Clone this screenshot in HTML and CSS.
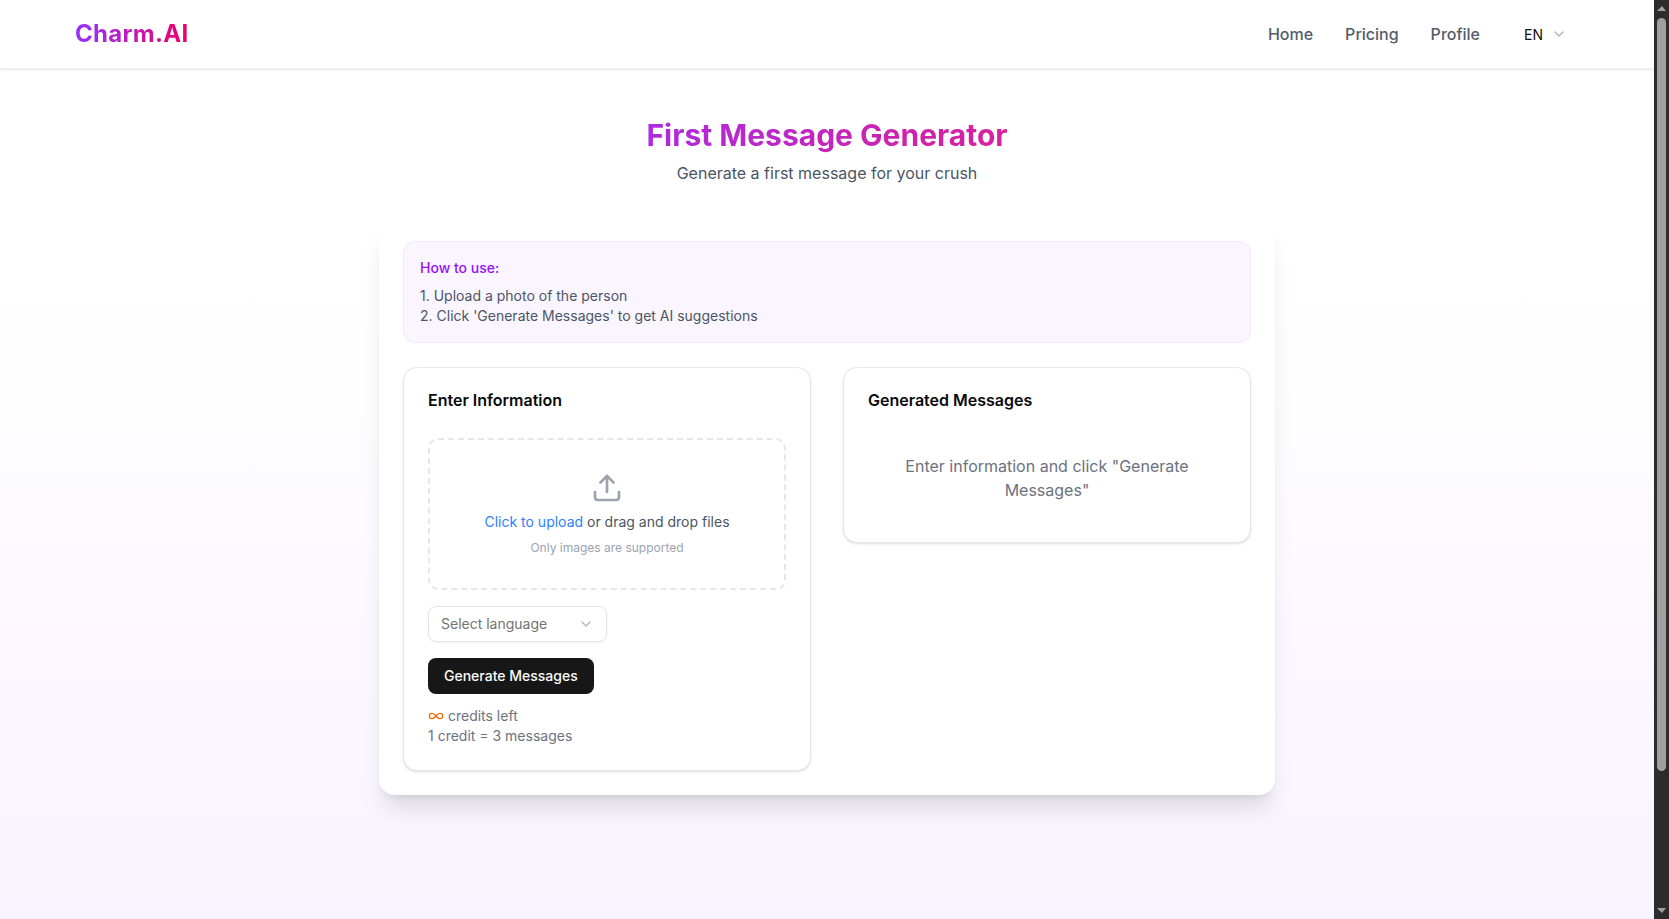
FILE: index.html
```html
<!DOCTYPE html>
<html lang="en">
<head>
    <meta charset="UTF-8">
    <meta name="viewport" content="width=device-width, initial-scale=1.0">
    <title>First Message Generator</title>
    <link rel="stylesheet" href="styles.css">
</head>
<body>
    <div class="page">
        <header class="topbar">
            <a class="logo" href="#">Charm.AI</a>
            <nav class="nav">
                <a href="#">Home</a>
                <a href="#">Pricing</a>
                <a href="#">Profile</a>
                <div class="lang-switch">
                    <span>EN</span>
                    <svg class="chevron" viewBox="0 0 24 24"><path d="m6 9 6 6 6-6"/></svg>
                </div>
            </nav>
        </header>

        <main class="content">
            <h1>First Message Generator</h1>
            <p class="subtitle">Generate a first message for your crush</p>

            <section class="card">
                <div class="howto">
                    <h2>How to use:</h2>
                    <p>1. Upload a photo of the person</p>
                    <p>2. Click 'Generate Messages' to get AI suggestions</p>
                </div>

                <div class="columns">
                    <div class="panel">
                        <h3>Enter Information</h3>
                        <div class="dropzone">
                            <svg class="upload-icon" viewBox="0 0 24 24">
                                <path d="M21 15v4a2 2 0 0 1-2 2H5a2 2 0 0 1-2-2v-4"/>
                                <path d="m17 8-5-5-5 5"/>
                                <path d="M12 3v12"/>
                            </svg>
                            <p class="drop-text"><span class="link">Click to upload</span> or drag and drop files</p>
                            <p class="drop-hint">Only images are supported</p>
                        </div>
                        <div class="select">
                            <span>Select language</span>
                            <svg class="chevron" viewBox="0 0 24 24"><path d="m6 9 6 6 6-6"/></svg>
                        </div>
                        <button type="button" class="generate">Generate Messages</button>
                        <div class="credits">
                            <p><svg class="infinity" viewBox="0 0 24 24"><path d="M12 12c-2-2.67-4-4-6-4a4 4 0 1 0 0 8c2 0 4-1.33 6-4Zm0 0c2 2.67 4 4 6 4a4 4 0 0 0 0-8c-2 0-4 1.33-6 4Z"/></svg> credits left</p>
                            <p>1 credit = 3 messages</p>
                        </div>
                    </div>

                    <div class="panel panel-result">
                        <h3>Generated Messages</h3>
                        <p class="placeholder">Enter information and click "Generate Messages"</p>
                    </div>
                </div>
            </section>
        </main>
    </div>

    <div class="scrollbar">
        <span class="arrow-up"></span>
        <span class="thumb"></span>
        <span class="arrow-down"></span>
    </div>
</body>
</html>
```

FILE: styles.css
```css
* {
    box-sizing: border-box;
}

body {
    margin: 0;
    height: 100vh;
    display: flex;
    overflow: hidden;
    font-family: Inter, 'Noto Sans', sans-serif;
    color: #4b5563;
}

p, h1, h2, h3 {
    margin: 0;
}

.page {
    flex: 1;
    min-width: 0;
    background: linear-gradient(to bottom, #ffffff 30%, #f8f4ff 100%);
}

/* top bar */
.topbar {
    height: 69px;
    padding: 0 87px 0 75px;
    display: flex;
    justify-content: space-between;
    align-items: center;
    background-color: #ffffff;
    border-bottom: 1px solid #f0f0f0;
    box-shadow: 0 1px 2px rgba(0, 0, 0, 0.1);
}

.logo {
    margin-bottom: 2px;
    font-size: 24px;
    font-weight: 700;
    letter-spacing: 0.3px;
    text-decoration: none;
    background: linear-gradient(to right, #9333ff, #ec0068);
    -webkit-background-clip: text;
    background-clip: text;
    color: transparent;
}

.nav {
    display: flex;
    align-items: center;
    gap: 32px;
}

.nav a {
    font-size: 16px;
    font-weight: 500;
    color: #535c6b;
    text-decoration: none;
}

.lang-switch {
    width: 43px;
    margin-left: 12px;
    display: flex;
    justify-content: space-between;
    align-items: center;
    font-size: 14px;
    font-weight: 400;
    color: #111111;
}

.chevron {
    width: 16px;
    height: 16px;
    fill: none;
    stroke: #b5b5b5;
    stroke-width: 2;
    stroke-linecap: round;
    stroke-linejoin: round;
}

/* main */
.content {
    padding-top: 46px;
    display: flex;
    flex-direction: column;
    align-items: center;
}

h1 {
    font-size: 30px;
    line-height: 40px;
    font-weight: 700;
    background: linear-gradient(to right, #ae2be0, #d9209b);
    -webkit-background-clip: text;
    background-clip: text;
    color: transparent;
}

.subtitle {
    margin-top: 6px;
    font-size: 16px;
    line-height: 24px;
}

.card {
    width: 896px;
    margin-top: 34px;
    padding: 22px 24px 24px;
    background-color: #ffffff;
    border-radius: 16px;
    box-shadow: 0 20px 25px -5px rgba(0, 0, 0, 0.1), 0 8px 10px -6px rgba(0, 0, 0, 0.1);
}

.howto {
    height: 102px;
    padding: 16px;
    background-color: #faf5ff;
    border: 1px solid #f3e8ff;
    border-radius: 12px;
    font-size: 14px;
    line-height: 20px;
}

.howto h2 {
    margin-bottom: 8px;
    font-size: 14px;
    line-height: 20px;
    font-weight: 500;
    color: #9810fa;
}

.columns {
    margin-top: 24px;
    display: grid;
    grid-template-columns: 1fr 1fr;
    gap: 32px;
    align-items: start;
}

.panel {
    padding: 23px 24px 24px;
    background-color: #ffffff;
    border: 1px solid #e5e7eb;
    border-radius: 14px;
    box-shadow: 0 1px 3px rgba(0, 0, 0, 0.1), 0 1px 2px -1px rgba(0, 0, 0, 0.1);
}

h3 {
    font-size: 16px;
    line-height: 18px;
    font-weight: 600;
    color: #0a0a0a;
}

.dropzone {
    height: 152px;
    margin-top: 29px;
    display: flex;
    flex-direction: column;
    align-items: center;
    padding-top: 32px;
    border: 2px dashed #e5e7eb;
    border-radius: 10px;
}

.upload-icon {
    width: 32px;
    height: 32px;
    fill: none;
    stroke: #9ca3af;
    stroke-width: 2;
    stroke-linecap: round;
    stroke-linejoin: round;
}

.drop-text {
    margin-top: 8px;
    font-size: 14px;
    line-height: 20px;
}

.link {
    color: #2b7fff;
}

.drop-hint {
    margin-top: 8px;
    font-size: 12px;
    line-height: 16px;
    color: #9ca3af;
}

.select {
    width: 179px;
    height: 36px;
    margin-top: 16px;
    padding: 0 12px 1px;
    display: flex;
    justify-content: space-between;
    align-items: center;
    border: 1px solid #e5e5e5;
    border-radius: 8px;
    box-shadow: 0 1px 2px rgba(0, 0, 0, 0.05);
    font-size: 14px;
    color: #737373;
}

.generate {
    display: block;
    height: 36px;
    margin-top: 16px;
    padding: 0 16px 1px;
    background-color: #171717;
    color: #fafafa;
    border: none;
    border-radius: 8px;
    font-family: inherit;
    font-size: 14px;
    font-weight: 500;
}

.credits {
    margin-top: 12px;
    font-size: 14px;
    line-height: 20px;
    color: #6b7280;
}

.infinity {
    width: 16px;
    height: 16px;
    vertical-align: -3px;
    fill: none;
    stroke: #ea700e;
    stroke-width: 2;
}

.placeholder {
    margin: 45px 20px 16px;
    text-align: center;
    font-size: 16px;
    line-height: 24px;
    color: #6b7280;
}

/* scrollbar */
.scrollbar {
    width: 15px;
    flex-shrink: 0;
    position: relative;
    background-color: #2c2c2c;
}

.thumb {
    position: absolute;
    top: 18px;
    left: 3px;
    width: 9px;
    height: 753px;
    background-color: #9f9f9f;
    border-radius: 5px;
}

.arrow-up, .arrow-down {
    position: absolute;
    left: 3px;
    width: 0;
    height: 0;
    border-left: 5px solid transparent;
    border-right: 4px solid transparent;
}

.arrow-up {
    top: 6px;
    border-bottom: 5px solid #9f9f9f;
}

.arrow-down {
    bottom: 6px;
    border-top: 5px solid #9f9f9f;
}
```
